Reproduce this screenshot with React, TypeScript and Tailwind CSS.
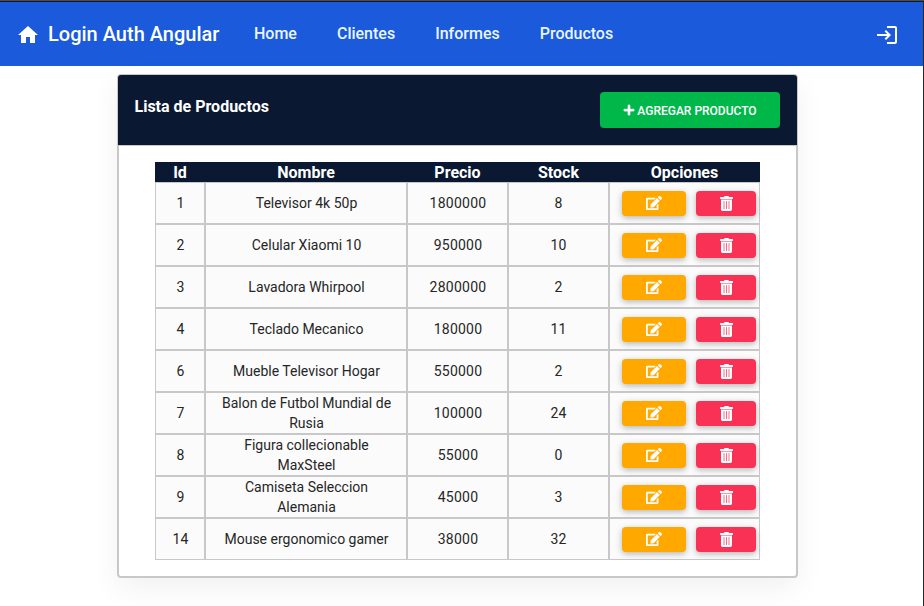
import React from "react";
import { MdHome, MdLogin } from "react-icons/md";
import { FaPlus, FaEdit } from "react-icons/fa";

type Product = { id: number; name: string; price: number; stock: number };

const products: Product[] = [
  { id: 1, name: "Televisor 4k 50p", price: 1800000, stock: 8 },
  { id: 2, name: "Celular Xiaomi 10", price: 950000, stock: 10 },
  { id: 3, name: "Lavadora Whirpool", price: 2800000, stock: 2 },
  { id: 4, name: "Teclado Mecanico", price: 180000, stock: 11 },
  { id: 6, name: "Mueble Televisor Hogar", price: 550000, stock: 2 },
  { id: 7, name: "Balon de Futbol Mundial de Rusia", price: 100000, stock: 24 },
  { id: 8, name: "Figura collecionable MaxSteel", price: 55000, stock: 0 },
  { id: 9, name: "Camiseta Seleccion Alemania", price: 45000, stock: 3 },
  { id: 14, name: "Mouse ergonomico gamer", price: 38000, stock: 32 },
];

const cell = "flex items-center justify-center border border-[#c8c8c8] bg-[#fbfbfb] text-center";

function TrashIcon() {
  return (
    <svg viewBox="0 0 13 15" className="ml-px h-[15px] w-[13px]" fill="currentColor">
      <path d="M4 1 4.6 0h3.8L9 1h3.4c.4 0 .6.2.6.5v.9c0 .3-.2.5-.6.5H.6c-.4 0-.6-.2-.6-.5v-.9C0 1.200.2 1 .6 1z" />
      <path d="M1 3.600h11v9.900c0 .8-.6 1.400-1.400 1.400H2.400c-.8 0-1.400-.6-1.400-1.400z" />
      <path d="M4 5.500v7.200M6.500 5.500v7.200M9 5.500v7.200" stroke="#f65f78" strokeWidth="0.9" strokeLinecap="round" />
    </svg>
  );
}

function Navbar() {
  return (
    <nav className="flex h-16 shrink-0 items-center bg-[#1a5adb] pl-4 pr-6 text-white">
      <MdHome className="mt-px size-6" />
      <span className="ml-2 w-[171px] whitespace-nowrap text-[20px] font-medium leading-8">Login Auth Angular</span>
      <div className="ml-[35px] flex gap-10 text-base font-medium leading-6 text-[#e9f6ff]">
        <a>Home</a>
        <a>Clientes</a>
        <a>Informes</a>
        <a>Productos</a>
      </div>
      <MdLogin className="ml-auto mt-0.5 size-6" />
    </nav>
  );
}

function ProductRow({ product }: { product: Product }) {
  return (
    <div className="grid h-[42px] grid-cols-[50px_202px_101px_101px_151px]">
      <div className={`${cell} pl-px`}>{product.id}</div>
      <div className={`${cell} pl-[13px] pr-3 tracking-normal`}>{product.name}</div>
      <div className={`${cell} pl-px`}>{product.price}</div>
      <div className={cell}>{product.stock}</div>
      <div className={`${cell} gap-2.5 pl-2`}>
        <button className="flex h-[25px] w-16 items-center justify-center rounded bg-[#ffa800] text-white shadow-[0_2px_6px_rgba(0,0,0,0.28)]">
          <FaEdit className="size-4" />
        </button>
        <button className="flex h-[25px] w-[60px] items-center justify-center rounded bg-[#f93154] text-white shadow-[0_2px_6px_rgba(0,0,0,0.28)]">
          <TrashIcon />
        </button>
      </div>
    </div>
  );
}

export default function App() {
  return (
    <div className="flex h-[606px] w-[924px] flex-col overflow-hidden border-t border-[#4a4e54] bg-white font-['Roboto',sans-serif]">
      <div className="flex flex-1 flex-col border-r border-t border-r-[#25282c] border-t-[#10182b]">
        <Navbar />
        <main className="ml-[117px] mt-2 h-[504px] w-[681px] rounded border-2 border-t border-[#c8c8c8] shadow-[0_10px_30px_rgba(0,0,0,0.06)]">
          <header className="-mx-px flex h-[71px] items-start justify-between rounded-t-[3px] border-b border-[#c8c8c8] bg-[#0a1931] pl-[16.5px] pr-[17px] text-white">
            <h1 className="mt-5 text-base font-bold leading-6">Lista de Productos</h1>
            <button className="mt-[17px] flex h-9 w-[180px] items-center justify-center gap-[2px] rounded bg-[#00b74a] text-[12px] font-medium">
              <FaPlus className="size-3" stroke="currentColor" strokeWidth={14} />
              <span className="mt-px">AGREGAR PRODUCTO</span>
            </button>
          </header>
          <section className="ml-9 mt-4 w-[605px]">
            <div className="grid h-5 grid-cols-[50px_202px_101px_101px_151px] bg-[#0a1931] text-center text-base font-bold leading-[22px] text-white">
              <div>Id</div>
              <div>Nombre</div>
              <div>Precio</div>
              <div>Stock</div>
              <div>Opciones</div>
            </div>
            <div className="text-sm leading-5 tracking-[0.25px] text-[#262626]">
              {products.map((p) => (
                <ProductRow key={p.id} product={p} />
              ))}
            </div>
          </section>
        </main>
      </div>
    </div>
  );
}
